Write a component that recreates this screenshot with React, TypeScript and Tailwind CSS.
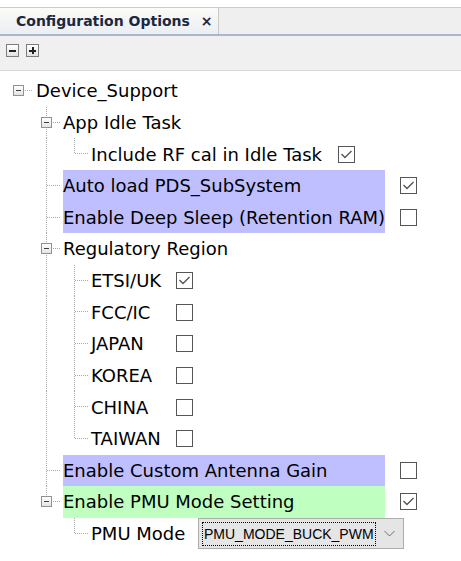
import React from 'react';

type Branch = 'root' | 'mid' | 'last';

type Row = {
  label: string;
  level: number;
  guides: boolean[];
  branch: Branch;
  expander?: boolean;
  hl?: 'blue' | 'green';
  check?: boolean;
  combo?: string;
  labelW?: string;
};

const DOT = '#a8a8a8';

const rows: Row[] = [
  { label: 'Device_Support', level: 0, guides: [], branch: 'root', expander: true },
  { label: 'App Idle Task', level: 1, guides: [false], branch: 'mid', expander: true },
  { label: 'Include RF cal in Idle Task', level: 2, guides: [false, true], branch: 'last', check: true, labelW: 'w-[247px]' },
  { label: 'Auto load PDS_SubSystem', level: 1, guides: [false], branch: 'mid', hl: 'blue', check: true, labelW: 'w-[322px]' },
  { label: 'Enable Deep Sleep (Retention RAM)', level: 1, guides: [false], branch: 'mid', hl: 'blue', check: false, labelW: 'w-[322px]' },
  { label: 'Regulatory Region', level: 1, guides: [false], branch: 'mid', expander: true },
  { label: 'ETSI/UK', level: 2, guides: [false, true], branch: 'mid', check: true, labelW: 'w-[85px]' },
  { label: 'FCC/IC', level: 2, guides: [false, true], branch: 'mid', check: false, labelW: 'w-[85px]' },
  { label: 'JAPAN', level: 2, guides: [false, true], branch: 'mid', check: false, labelW: 'w-[85px]' },
  { label: 'KOREA', level: 2, guides: [false, true], branch: 'mid', check: false, labelW: 'w-[85px]' },
  { label: 'CHINA', level: 2, guides: [false, true], branch: 'mid', check: false, labelW: 'w-[85px]' },
  { label: 'TAIWAN', level: 2, guides: [false, true], branch: 'last', check: false, labelW: 'w-[85px]' },
  { label: 'Enable Custom Antenna Gain', level: 1, guides: [false], branch: 'mid', hl: 'blue', check: false, labelW: 'w-[322px]' },
  { label: 'Enable PMU Mode Setting', level: 1, guides: [false], branch: 'last', expander: true, hl: 'green', check: true, labelW: 'w-[322px]' },
  { label: 'PMU Mode', level: 2, guides: [false, false], branch: 'last', combo: 'PMU_MODE_BUCK_PWM', labelW: 'w-[107px]' },
];

function GuideCell({ on }: { on: boolean }) {
  return (
    <div className="relative h-full w-[28px] shrink-0">
      {on && (
        <svg className="absolute inset-0 h-full w-full" shapeRendering="crispEdges">
          <line x1="13.5" y1="0" x2="13.5" y2="100%" stroke={DOT} strokeDasharray="1 1" />
        </svg>
      )}
    </div>
  );
}

function BranchCell({ branch, expander }: { branch: Branch; expander?: boolean }) {
  return (
    <div className="relative flex h-full w-[28px] shrink-0 items-center">
      <svg className="absolute inset-0 h-full w-full" shapeRendering="crispEdges">
        {branch !== 'root' && (
          <line x1="13.5" y1="0" x2="13.5" y2={branch === 'mid' ? '100%' : '50%'} stroke={DOT} strokeDasharray="1 1" />
        )}
        <line x1="14" y1="50%" x2="28" y2="50%" stroke={DOT} strokeDasharray="1 1" />
      </svg>
      {expander && (
        <div className="relative ml-[8px] flex h-[11px] w-[11px] items-center justify-center border border-[#919191] bg-linear-to-b from-white to-[#e4e4e4]">
          <div className="h-px w-[5px] bg-[#3c3c3c]" />
        </div>
      )}
    </div>
  );
}

function Check({ on }: { on: boolean }) {
  return (
    <div className="flex h-[17px] w-[17px] shrink-0 items-center justify-center border border-[#555] bg-white">
      {on && (
        <svg width="13" height="11" viewBox="0 0 13 11">
          <path d="M1.5 5 L5 8.5 L11.5 2" fill="none" stroke="#555" strokeWidth="1.4" />
        </svg>
      )}
    </div>
  );
}

function Combo({ value }: { value: string }) {
  return (
    <div className="flex h-[31px] w-[206px] shrink-0 items-center border border-[#adadad] bg-[#e5e5e5]">
      <span className="ml-[3px] border border-dotted border-black px-[1px] font-['Liberation_Sans',sans-serif] text-[14px] leading-[22px] text-black">
        {value}
      </span>
      <svg className="ml-auto mr-[8px]" width="11" height="7" viewBox="0 0 11 7">
        <path d="M0.5 1 L5.5 6 L10.5 1" fill="none" stroke="#707070" strokeWidth="1" />
      </svg>
    </div>
  );
}

function TreeRow({ row }: { row: Row }) {
  const bg = row.hl === 'blue' ? 'bg-[#bfbfff]' : row.hl === 'green' ? 'bg-[#bfffbf]' : '';
  return (
    <div className="flex h-[31.64px] items-stretch pl-[5px]">
      {row.guides.map((g, i) => (
        <GuideCell key={i} on={g} />
      ))}
      <BranchCell branch={row.branch} expander={row.expander} />
      <div className={`flex h-full shrink-0 items-center whitespace-nowrap ${row.level === 0 ? 'ml-[3px]' : 'ml-[2px]'} ${row.labelW ?? ''} ${bg}`}>
        {row.label}
      </div>
      {row.check !== undefined && (
        <div className={`flex items-center ${row.level === 1 ? 'ml-[15px]' : ''}`}>
          <Check on={row.check} />
        </div>
      )}
      {row.combo && (
        <div className="flex items-center">
          <Combo value={row.combo} />
        </div>
      )}
    </div>
  );
}

export default function App() {
  return (
    <div className="h-[561px] w-[461px] overflow-hidden bg-white font-['DejaVu_Sans',sans-serif] text-[18px] text-black">
      <div className="h-[7px]" />
      {/* tab strip */}
      <div className="flex h-[29px] border-t border-b-2 border-t-[#c3cdd8] border-b-[#a7b7cc] bg-[#efefef]">
        <div className="flex w-[219px] items-center border-r border-[#c9c9c9] bg-linear-to-b from-[#fbfbf7] to-[#eceef2] pl-[16px] text-[14px] font-bold text-[#1b2840]">
          Configuration Options
          <span className="ml-[11px] text-[14px]">×</span>
        </div>
      </div>
      {/* toolbar */}
      <div className="flex h-[35px] items-start gap-[7px] border-b border-[#dadada] bg-[#f0f0f0] pl-[6px] pt-[8px]">
        <div className="flex h-[13px] w-[13px] items-center justify-center border border-[#7d7d7d] bg-linear-to-b from-white to-[#e2e2e2]">
          <div className="h-[2px] w-[7px] bg-[#222]" />
        </div>
        <div className="relative flex h-[13px] w-[13px] items-center justify-center border border-[#7d7d7d] bg-linear-to-b from-white to-[#e2e2e2]">
          <div className="h-[2px] w-[7px] bg-[#222]" />
          <div className="absolute h-[7px] w-[2px] bg-[#222]" />
        </div>
      </div>
      {/* tree */}
      <div className="pt-[4px]">
        {rows.map((r) => (
          <TreeRow key={r.label} row={r} />
        ))}
      </div>
    </div>
  );
}
